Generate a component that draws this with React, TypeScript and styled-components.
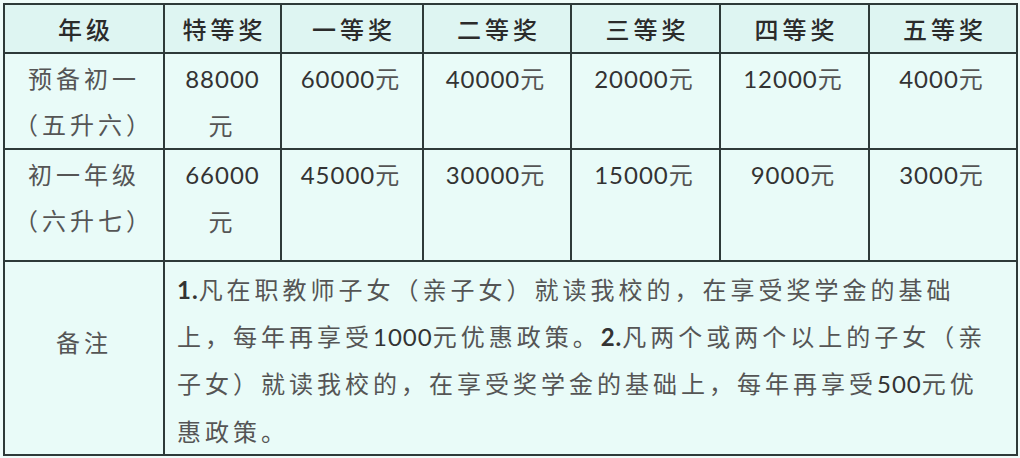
import React from 'react';
import styled, { createGlobalStyle } from 'styled-components';

const GlobalStyle = createGlobalStyle`
  html, body {
    margin: 0;
    background: #effcfa;
  }
  body {
    padding: 3px 0 0 3px;
    font-family: "Noto Sans CJK SC", sans-serif;
  }
`;

const Sheet = styled.table`
  border-collapse: collapse;
  table-layout: fixed;
  width: 1013px;
  background: #e9fbf8;
`;

const HeadRow = styled.tr`
  height: 49px;
  background: #def5f2;
`;

const Row = styled.tr<{ $height: number }>`
  height: ${(p) => p.$height}px;
`;

const HeadCell = styled.th`
  border: 2px solid #2e3a39;
  padding: 0;
  font-size: 24px;
  font-weight: 500;
  letter-spacing: 4px;
  text-indent: 4px;
  color: #2b2b2b;
  text-align: center;
  vertical-align: middle;
`;

const Cell = styled.td<{ $pad?: number }>`
  border: 2px solid #2e3a39;
  padding: 1px ${(p) => p.$pad ?? 8}px 0;
  font-size: 24px;
  line-height: 46px;
  letter-spacing: 4px;
  color: #555;
  text-align: center;
  vertical-align: top;
`;

const LabelCell = styled(Cell)`
  vertical-align: middle;
  padding-bottom: 32px;
`;

const NoteCell = styled.td`
  border: 2px solid #2e3a39;
  padding: 4px 15px 0 12px;
  font-size: 24px;
  line-height: 46.2px;
  letter-spacing: 4px;
  color: #555;
  text-align: left;
  vertical-align: top;
`;

const Num = styled.span<{ $bold?: boolean }>`
  font-family: Lato, "Noto Sans CJK SC", sans-serif;
  font-weight: ${(p) => (p.$bold ? 700 : 400)};
  letter-spacing: 1px;
  color: #333;
`;

const widths = [160, 117, 142, 148, 149, 149, 148];
const heads = ['年级', '特等奖', '一等奖', '二等奖', '三等奖', '四等奖', '五等奖'];

const rows = [
  { grade: '预备初一（五升六）', height: 96, amounts: ['88000', '60000', '40000', '20000', '12000', '4000'] },
  { grade: '初一年级（六升七）', height: 112, amounts: ['66000', '45000', '30000', '15000', '9000', '3000'] },
];

const App = () => {
  return (
    <>
      <GlobalStyle />
      <Sheet>
        <colgroup>
          {widths.map((w, i) => (
            <col key={i} style={{ width: w }} />
          ))}
        </colgroup>
        <thead>
          <HeadRow>
            {heads.map((h) => (
              <HeadCell key={h}>{h}</HeadCell>
            ))}
          </HeadRow>
        </thead>
        <tbody>
          {rows.map((r) => (
            <Row key={r.grade} $height={r.height}>
              <Cell>{r.grade}</Cell>
              {r.amounts.map((a, i) => (
                <Cell key={i} $pad={i === 0 ? 10 : 4}>
                  <Num>{a}</Num>元
                </Cell>
              ))}
            </Row>
          ))}
          <Row $height={192}>
            <LabelCell>备注</LabelCell>
            <NoteCell colSpan={6}>
              <Num $bold>1.</Num>凡在职教师子女（亲子女）就读我校的，在享受奖学金的基础上，每年再享受<Num>1000</Num>元优惠政策。<Num $bold>2.</Num>凡两个或两个以上的子女（亲子女）就读我校的，在享受奖学金的基础上，每年再享受<Num>500</Num>元优惠政策。
            </NoteCell>
          </Row>
        </tbody>
      </Sheet>
    </>
  );
};

export default App;
